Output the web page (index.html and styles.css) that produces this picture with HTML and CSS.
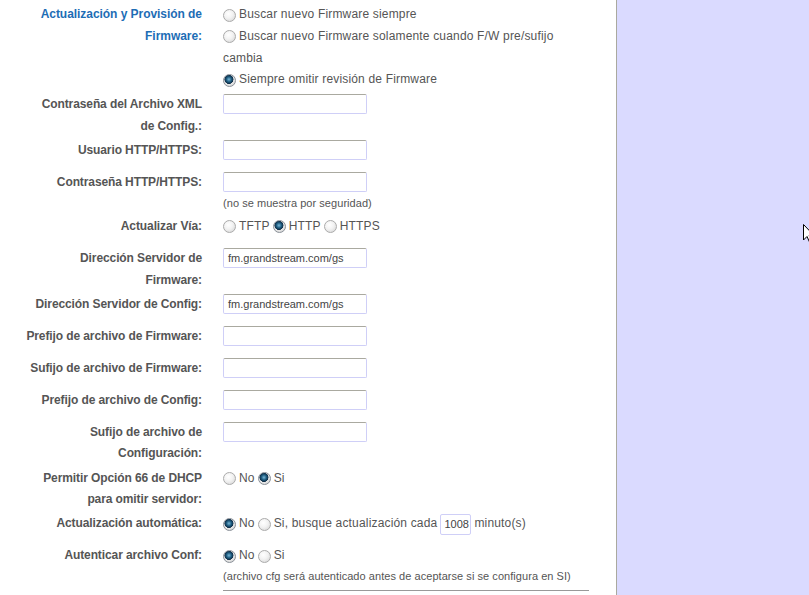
FILE: index.html
```html
<!DOCTYPE html>
<html lang="es">
<head>
<meta charset="utf-8">
<title>Actualización</title>
<link rel="stylesheet" href="styles.css">
</head>
<body>
<div class="page">
  <main class="main">
    <div class="form">
      <div class="row row-first">
        <div class="label label-blue">Actualización y Provisión de<br>Firmware:</div>
        <div class="value value-first">
          <div class="tline"><span class="radio"></span>Buscar nuevo Firmware siempre</div>
          <div class="tline"><span class="radio"></span>Buscar nuevo Firmware solamente cuando F/W pre/sufijo</div>
          <div class="tline">cambia</div>
          <div class="tline"><span class="radio on"></span>Siempre omitir revisión de Firmware</div>
        </div>
      </div>

      <div class="row">
        <div class="label">Contraseña del Archivo XML<br>de Config.:</div>
        <div class="value"><div class="line"><span class="field"></span></div></div>
      </div>

      <div class="row">
        <div class="label">Usuario HTTP/HTTPS:</div>
        <div class="value"><div class="line"><span class="field"></span></div></div>
      </div>

      <div class="row">
        <div class="label">Contraseña HTTP/HTTPS:</div>
        <div class="value">
          <div class="line"><span class="field"></span></div>
          <div class="note">(no se muestra por seguridad)</div>
        </div>
      </div>

      <div class="row">
        <div class="label">Actualizar Vía:</div>
        <div class="value">
          <div class="line opts">
            <span class="opt"><span class="radio"></span>TFTP</span>
            <span class="opt"><span class="radio on"></span>HTTP</span>
            <span class="opt"><span class="radio"></span>HTTPS</span>
          </div>
        </div>
      </div>

      <div class="row">
        <div class="label">Dirección Servidor de<br>Firmware:</div>
        <div class="value"><div class="line"><span class="field">fm.grandstream.com/gs</span></div></div>
      </div>

      <div class="row">
        <div class="label">Dirección Servidor de Config:</div>
        <div class="value"><div class="line"><span class="field">fm.grandstream.com/gs</span></div></div>
      </div>

      <div class="row">
        <div class="label">Prefijo de archivo de Firmware:</div>
        <div class="value"><div class="line"><span class="field"></span></div></div>
      </div>

      <div class="row">
        <div class="label">Sufijo de archivo de Firmware:</div>
        <div class="value"><div class="line"><span class="field"></span></div></div>
      </div>

      <div class="row">
        <div class="label">Prefijo de archivo de Config:</div>
        <div class="value"><div class="line"><span class="field"></span></div></div>
      </div>

      <div class="row">
        <div class="label">Sufijo de archivo de<br>Configuración:</div>
        <div class="value"><div class="line"><span class="field"></span></div></div>
      </div>

      <div class="row">
        <div class="label">Permitir Opción 66 de DHCP<br>para omitir servidor:</div>
        <div class="value">
          <div class="line opts">
            <span class="opt"><span class="radio"></span>No</span>
            <span class="opt"><span class="radio on"></span>Si</span>
          </div>
        </div>
      </div>

      <div class="row">
        <div class="label">Actualización automática:</div>
        <div class="value">
          <div class="line opts">
            <span class="opt"><span class="radio on"></span>No</span>
            <span class="opt"><span class="radio"></span>Si, busque actualización cada</span>
            <span class="field small">1008</span>
            <span>minuto(s)</span>
          </div>
        </div>
      </div>

      <div class="row">
        <div class="label">Autenticar archivo Conf:</div>
        <div class="value">
          <div class="line opts">
            <span class="opt"><span class="radio on"></span>No</span>
            <span class="opt"><span class="radio"></span>Si</span>
          </div>
          <div class="note">(archivo cfg será autenticado antes de aceptarse si se configura en SI)</div>
        </div>
      </div>

      <div class="sep"></div>
    </div>
  </main>
  <aside class="side"></aside>
</div>
<svg class="cursor" width="12" height="19" viewBox="0 0 12 19"><polygon points="0.5,0.5 0.5,16 4,12.5 6.5,18 8.5,17 6,11.5 11,11.5" fill="#fff" stroke="#000" stroke-width="1"/></svg>
</body>
</html>
```

FILE: styles.css
```css
html, body {
  margin: 0;
  padding: 0;
  width: 809px;
  height: 595px;
  overflow: hidden;
}

body {
  font-family: "Liberation Sans", Arial, sans-serif;
  font-size: 12px;
  color: #555;
  background: #fff;
  position: relative;
}

.page {
  display: flex;
  height: 595px;
}

.main {
  width: 616px;
  background: #fff;
  border-right: 1px solid #aaa99f;
  flex: none;
}

.side {
  flex: 1;
  background: #dadaff;
}

.form {
  padding-top: 3px;
}

.row {
  display: grid;
  grid-template-columns: 202px 366px;
  column-gap: 21px;
  min-height: 32px;
  padding: 1.3px 0;
  box-sizing: border-box;
  align-items: start;
}

.label {
  text-align: right;
  font-weight: bold;
  font-size: 12px;
  line-height: 21.6px;
  letter-spacing: -0.1px;
  color: #555;
  white-space: nowrap;
}

.label-blue {
  color: #1d6db5;
  letter-spacing: -0.05px;
}

.value {
  font-size: 12px;
  line-height: 21.6px;
  letter-spacing: 0.17px;
  color: #555;
}

.value-first {
  padding-bottom: 0.6px;
}

.tline {
  display: flex;
  align-items: center;
  height: 21.7px;
  white-space: nowrap;
}

.line {
  display: flex;
  align-items: flex-start;
  height: 21.6px;
  white-space: nowrap;
}

.opts {
  align-items: center;
  gap: 3px;
}

.opt {
  display: inline-flex;
  align-items: center;
}

.radio {
  display: inline-block;
  width: 11px;
  height: 11px;
  border-radius: 50%;
  border: 1px solid #ababab;
  background: radial-gradient(circle at 40% 35%, #ffffff 0%, #f2f2f2 45%, #d0d0d0 100%);
  margin-right: 3px;
  flex: none;
  box-sizing: content-box;
}

.radio.on {
  border-color: #8a9098;
  background:
    radial-gradient(circle at 45% 40%, #7ab8d8 0%, #1e5c80 28%, #0f2c45 48%, rgba(0,0,0,0) 53%),
    radial-gradient(circle at 40% 35%, #ffffff 0%, #f0f0f0 45%, #c8c8c8 100%);
}

.field {
  display: inline-block;
  width: 144px;
  height: 20px;
  box-sizing: border-box;
  border: 1px solid #cfcff7;
  border-top-color: #aaa9a0;
  border-radius: 2px;
  background: #fff;
  font-size: 11px;
  line-height: 18px;
  letter-spacing: 0;
  color: #444;
  padding: 0 4px;
  overflow: hidden;
}

.field.small {
  width: 31px;
  height: 21px;
  line-height: 19px;
  padding: 0 3px;
  text-align: center;
  border-top-color: #cfcff7;
}

.note {
  font-size: 11px;
  line-height: 19.8px;
  letter-spacing: 0.05px;
  color: #555;
  white-space: nowrap;
}

.sep {
  margin: 2px 0 0 223px;
  width: 366px;
  border-top: 1px solid #999;
}

.cursor {
  position: absolute;
  left: 803px;
  top: 224px;
}
```
